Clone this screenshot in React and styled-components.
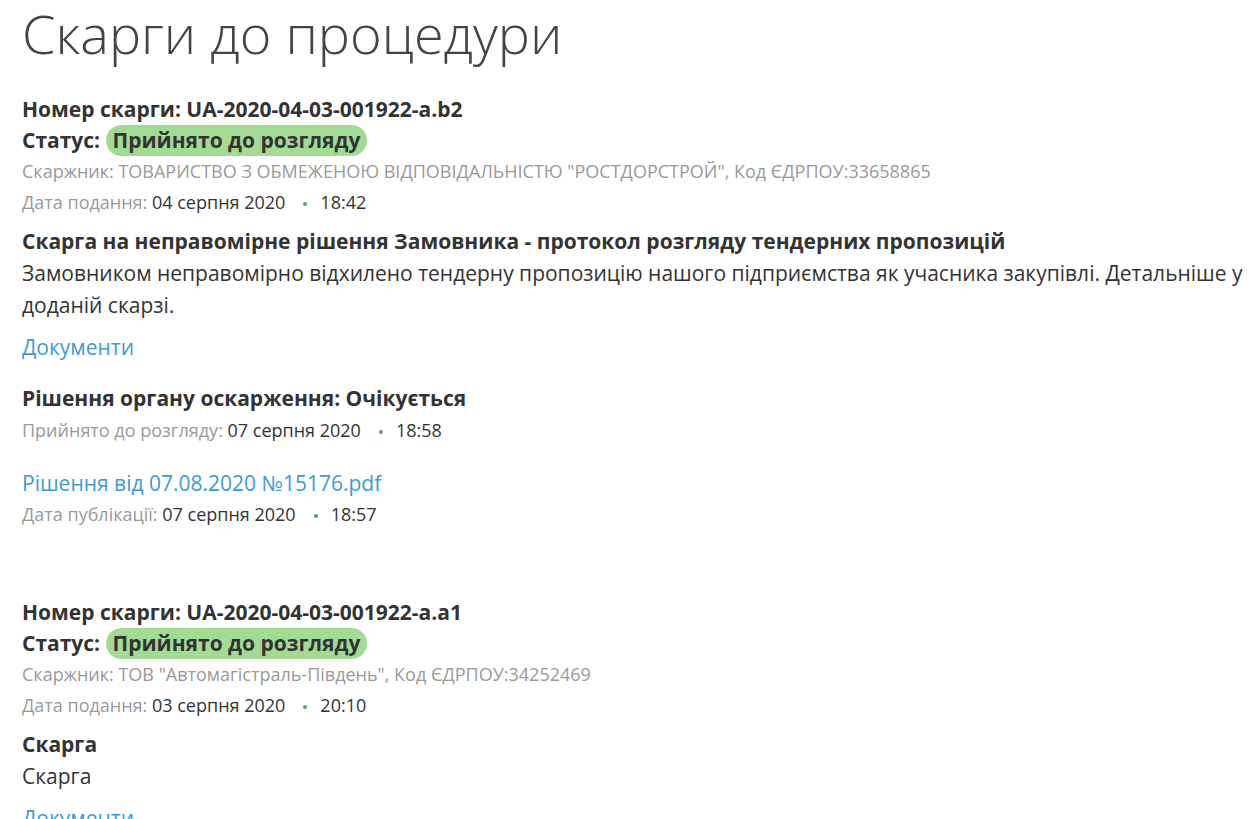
import React from 'react';
import styled, { createGlobalStyle } from 'styled-components';

const GlobalStyle = createGlobalStyle`
  html, body {
    margin: 0;
    padding: 0;
    background: #fff;
  }
  body {
    font-family: "Open Sans", "Noto Sans", sans-serif;
    color: #333;
  }
`;

const complaints = [
  {
    number: 'UA-2020-04-03-001922-a.b2',
    status: 'Прийнято до розгляду',
    author: 'ТОВАРИСТВО З ОБМЕЖЕНОЮ ВІДПОВІДАЛЬНІСТЮ "РОСТДОРСТРОЙ", Код ЄДРПОУ:33658865',
    date: '04 серпня 2020',
    time: '18:42',
    title: 'Скарга на неправомірне рішення Замовника - протокол розгляду тендерних пропозицій',
    description:
      'Замовником неправомірно відхилено тендерну пропозицію нашого підприємства як учасника закупівлі. Детальніше у доданій скарзі.',
    decision: {
      status: 'Очікується',
      acceptedDate: '07 серпня 2020',
      acceptedTime: '18:58',
      file: 'Рішення від 07.08.2020 №15176.pdf',
      publishedDate: '07 серпня 2020',
      publishedTime: '18:57',
    },
  },
  {
    number: 'UA-2020-04-03-001922-a.a1',
    status: 'Прийнято до розгляду',
    author: 'ТОВ "Автомагістраль-Південь", Код ЄДРПОУ:34252469',
    date: '03 серпня 2020',
    time: '20:10',
    title: 'Скарга',
    description: 'Скарга',
  },
];

function DateLine({ label, date, time, top }) {
  return (
    <Meta $top={top}>
      {label}: <Value>{date}</Value>
      <Dot />
      <Value>{time}</Value>
    </Meta>
  );
}

function Complaint({ item }) {
  return (
    <Item>
      <Heading>Номер скарги: {item.number}</Heading>
      <Heading>
        Статус: <Badge>{item.status}</Badge>
      </Heading>
      <Meta>Скаржник: {item.author}</Meta>
      <DateLine label="Дата подання" date={item.date} time={item.time} />
      <Heading $top={8}>{item.title}</Heading>
      <Text>{item.description}</Text>
      <Link href="#" $top={11}>Документи</Link>
      {item.decision && (
        <>
          <Heading $top={20}>Рішення органу оскарження: {item.decision.status}</Heading>
          <DateLine
            label="Прийнято до розгляду"
            date={item.decision.acceptedDate}
            time={item.decision.acceptedTime}
            top={1}
          />
          <Link href="#" $top={22}>{item.decision.file}</Link>
          <DateLine
            label="Дата публікації"
            date={item.decision.publishedDate}
            time={item.decision.publishedTime}
          />
        </>
      )}
    </Item>
  );
}

export default function App() {
  return (
    <>
      <GlobalStyle />
      <Page>
        <Title>Скарги до процедури</Title>
        <List>
          {complaints.map((c) => (
            <Complaint key={c.number} item={c} />
          ))}
        </List>
      </Page>
    </>
  );
}

const Page = styled.div`
  padding: 0 8px 0 22px;
  width: 1225px;
`;

const Title = styled.h1`
  margin: 0;
  font-size: 54px;
  line-height: 66px;
  font-weight: 300;
  color: #444;
`;

const List = styled.div`
  display: flex;
  flex-direction: column;
  gap: 67px;
  margin-top: 28px;
`;

const Item = styled.div`
  display: flex;
  flex-direction: column;
  align-items: flex-start;
`;

const Heading = styled.div`
  font-size: 21px;
  font-weight: 700;
  line-height: 31px;
  color: #333;
  margin-top: ${(p) => p.$top || 0}px;
`;

const Badge = styled.span`
  display: inline-block;
  background: #a3db94;
  border-radius: 16px;
  padding: 0 7px;
  line-height: 31px;
  color: #333;
`;

const Meta = styled.div`
  font-size: 18px;
  line-height: 31px;
  color: #999;
  display: flex;
  align-items: center;
  white-space: pre;
  margin-top: ${(p) => p.$top || 0}px;
`;

const Value = styled.span`
  color: #333;
`;

const Dot = styled.span`
  display: inline-block;
  width: 4px;
  height: 4px;
  border-radius: 50%;
  background: #5aa35a;
  margin: 2px 13px 0 18px;
`;

const Text = styled.div`
  font-size: 21px;
  line-height: 32px;
  color: #333;
`;

const Link = styled.a`
  font-size: 21px;
  line-height: 31px;
  color: #3d9bd0;
  text-decoration: none;
  margin-top: ${(p) => p.$top || 0}px;
`;
